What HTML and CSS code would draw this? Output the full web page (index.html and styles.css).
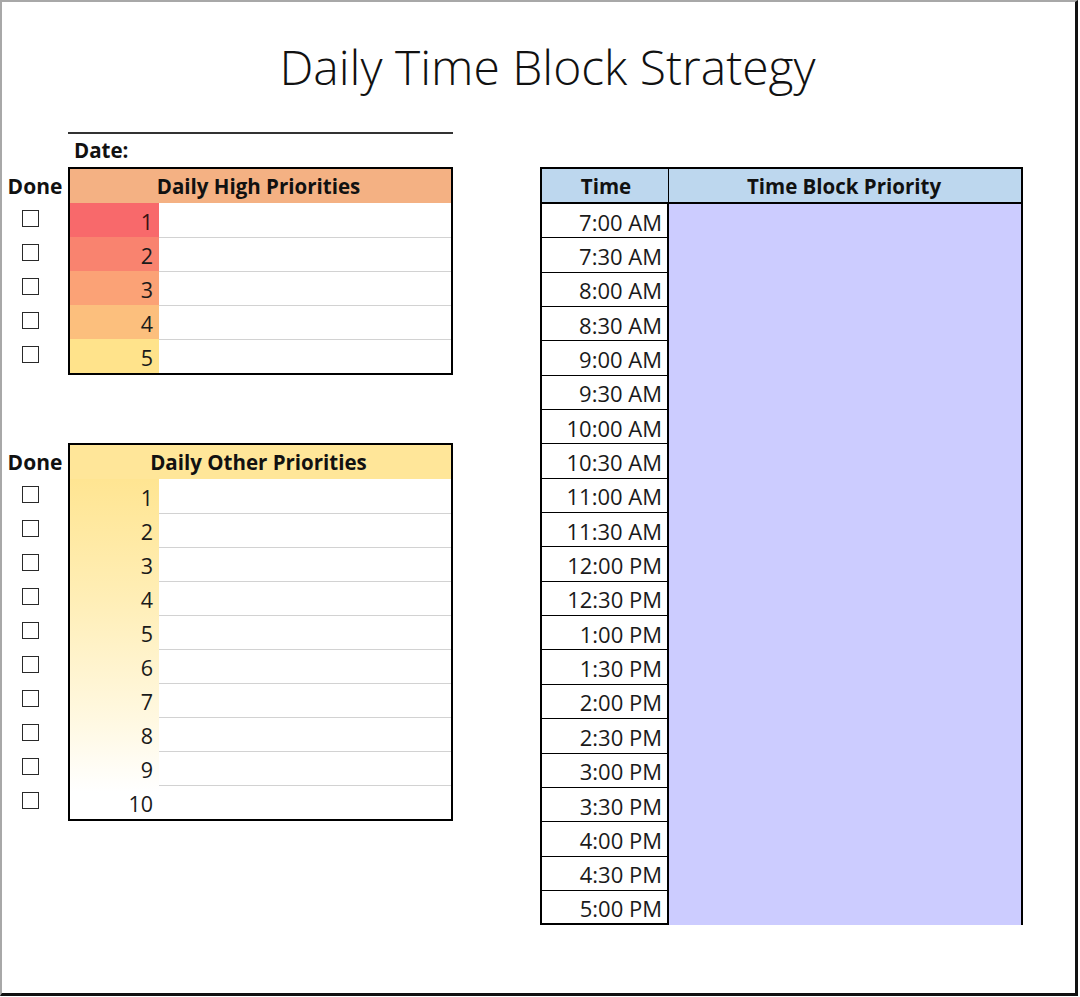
FILE: index.html
```html
<!DOCTYPE html>
<html lang="en">
<head>
<meta charset="utf-8">
<title>Daily Time Block Strategy</title>
<link rel="stylesheet" href="styles.css">
</head>
<body>
<div class="sheet">
  <h1 class="title">Daily Time Block Strategy</h1>
  <div class="main">
    <div class="left">
      <div class="date-row"><span class="date-label">Date:</span></div>

      <div class="block">
        <div class="done-col">
          <div class="done-head">Done</div>
          <div class="done-cell"><span class="cb"></span></div>
          <div class="done-cell"><span class="cb"></span></div>
          <div class="done-cell"><span class="cb"></span></div>
          <div class="done-cell"><span class="cb"></span></div>
          <div class="done-cell"><span class="cb"></span></div>
        </div>
        <div class="ptable high">
          <div class="phead">Daily High Priorities</div>
          <div class="prow"><div class="pnum p1">1</div><div class="pfield"></div></div>
          <div class="prow"><div class="pnum p2">2</div><div class="pfield"></div></div>
          <div class="prow"><div class="pnum p3">3</div><div class="pfield"></div></div>
          <div class="prow"><div class="pnum p4">4</div><div class="pfield"></div></div>
          <div class="prow"><div class="pnum p5">5</div><div class="pfield"></div></div>
        </div>
      </div>

      <div class="block other-block">
        <div class="done-col">
          <div class="done-head">Done</div>
          <div class="done-cell"><span class="cb"></span></div>
          <div class="done-cell"><span class="cb"></span></div>
          <div class="done-cell"><span class="cb"></span></div>
          <div class="done-cell"><span class="cb"></span></div>
          <div class="done-cell"><span class="cb"></span></div>
          <div class="done-cell"><span class="cb"></span></div>
          <div class="done-cell"><span class="cb"></span></div>
          <div class="done-cell"><span class="cb"></span></div>
          <div class="done-cell"><span class="cb"></span></div>
          <div class="done-cell"><span class="cb"></span></div>
        </div>
        <div class="ptable other">
          <div class="phead">Daily Other Priorities</div>
          <div class="obody">
            <div class="prow"><div class="pnum">1</div><div class="pfield"></div></div>
            <div class="prow"><div class="pnum">2</div><div class="pfield"></div></div>
            <div class="prow"><div class="pnum">3</div><div class="pfield"></div></div>
            <div class="prow"><div class="pnum">4</div><div class="pfield"></div></div>
            <div class="prow"><div class="pnum">5</div><div class="pfield"></div></div>
            <div class="prow"><div class="pnum">6</div><div class="pfield"></div></div>
            <div class="prow"><div class="pnum">7</div><div class="pfield"></div></div>
            <div class="prow"><div class="pnum">8</div><div class="pfield"></div></div>
            <div class="prow"><div class="pnum">9</div><div class="pfield"></div></div>
            <div class="prow"><div class="pnum">10</div><div class="pfield"></div></div>
          </div>
        </div>
      </div>
    </div>

    <div class="right">
      <div class="ttable">
        <div class="thead thead-time">Time</div>
        <div class="thead thead-prio">Time Block Priority</div>
        <div class="tcol">
          <div class="tcell">7:00 AM</div>
          <div class="tcell">7:30 AM</div>
          <div class="tcell">8:00 AM</div>
          <div class="tcell">8:30 AM</div>
          <div class="tcell">9:00 AM</div>
          <div class="tcell">9:30 AM</div>
          <div class="tcell">10:00 AM</div>
          <div class="tcell">10:30 AM</div>
          <div class="tcell">11:00 AM</div>
          <div class="tcell">11:30 AM</div>
          <div class="tcell">12:00 PM</div>
          <div class="tcell">12:30 PM</div>
          <div class="tcell">1:00 PM</div>
          <div class="tcell">1:30 PM</div>
          <div class="tcell">2:00 PM</div>
          <div class="tcell">2:30 PM</div>
          <div class="tcell">3:00 PM</div>
          <div class="tcell">3:30 PM</div>
          <div class="tcell">4:00 PM</div>
          <div class="tcell">4:30 PM</div>
          <div class="tcell">5:00 PM</div>
        </div>
        <div class="tprio"></div>
      </div>
    </div>
  </div>
</div>
</body>
</html>
```

FILE: styles.css
```css
* { box-sizing: border-box; }

html, body {
  margin: 0;
  padding: 0;
  background: #fff;
}

body {
  font-family: "Open Sans", "Liberation Sans", sans-serif;
  color: #111;
}

.sheet {
  width: 1078px;
  height: 996px;
  border-top: 2px solid #a8a8a8;
  border-left: 2px solid #a8a8a8;
  border-right: 3px solid #111;
  border-bottom: 3px solid #111;
  background: #fff;
}

.title {
  margin: 0;
  height: 128px;
  padding: 0 0 0 18px;
  display: flex;
  align-items: center;
  justify-content: center;
  font-family: "Open Sans", "Liberation Sans", sans-serif;
  font-weight: 350;
  font-size: 48px;
  color: #111;
}

.main {
  display: flex;
  align-items: flex-start;
}

.left {
  width: 451px;
  display: flex;
  flex-direction: column;
}

.date-row {
  margin-left: 66px;
  width: 385px;
  height: 35px;
  margin-top: 2px;
  border-top: 2px solid #333;
  padding-left: 6px;
  display: flex;
  align-items: center;
}

.date-label {
  font-weight: 700;
  font-size: 20.5px;
  margin-top: -1px;
}

.block {
  display: flex;
  align-items: flex-start;
}

.other-block {
  margin-top: 68px;
}

.done-col {
  width: 66px;
  padding-top: 2px;
  display: flex;
  flex-direction: column;
}

.done-head {
  height: 34px;
  display: flex;
  align-items: center;
  justify-content: center;
  font-weight: 700;
  font-size: 21px;
}

.done-cell {
  height: 34px;
  display: flex;
  align-items: center;
  padding-left: 20px;
  padding-bottom: 4px;
}

.cb {
  width: 17px;
  height: 17px;
  border: 1.5px solid #2a2a2a;
  background: #fff;
}

.ptable {
  width: 385px;
  border: 2px solid #000;
  background: #fff;
}

.phead {
  height: 34px;
  display: flex;
  align-items: center;
  justify-content: center;
  padding-right: 4px;
  font-weight: 700;
  font-size: 20.5px;
}

.high .phead { background: #f4b183; }
.other .phead { background: #ffe699; }

.prow {
  height: 34px;
  display: grid;
  grid-template-columns: 89px 1fr;
}

.pnum {
  display: flex;
  align-items: center;
  justify-content: flex-end;
  padding-right: 6px;
  padding-top: 2px;
  font-size: 21.5px;
  color: #1a1a1a;
}

.pfield {
  background: #fff;
}

.prow + .prow .pfield {
  border-top: 1px solid #d2d2d2;
}

.p1 { background: #f8696b; color: #3a1212; }
.p2 { background: #f9836f; }
.p3 { background: #fba276; }
.p4 { background: #fcbf7d; }
.p5 { background: #ffe38b; }

.obody {
  background: linear-gradient(to bottom, #ffe592 0%, #ffeeb6 35%, #fff8e0 70%, #ffffff 92%) left top / 89px 100% no-repeat;
}

.right {
  margin-left: 87px;
  margin-top: 37px;
}

.ttable {
  width: 483px;
  border: 2px solid #000;
  border-bottom: none;
  display: grid;
  grid-template-columns: 127px 1fr;
}

.thead {
  height: 35px;
  background: #bdd7ee;
  border-bottom: 2px solid #000;
  display: flex;
  align-items: center;
  justify-content: center;
  font-weight: 700;
  font-size: 20.5px;
}

.thead-time {
  border-right: 1px solid #000;
  padding-left: 2px;
}

.thead-prio {
  padding-right: 2px;
}

.tcol {
  display: flex;
  flex-direction: column;
  border-right: 2px solid #000;
}

.tcell {
  height: 34.35px;
  border-bottom: 1px solid #000;
  display: flex;
  align-items: center;
  justify-content: flex-end;
  padding-right: 5px;
  padding-top: 2px;
  font-size: 22px;
  color: #1a1a1a;
  background: #fff;
}

.tcell:last-child {
  border-bottom: 2px solid #000;
}

.tprio {
  background: #ccccff;
}
```
